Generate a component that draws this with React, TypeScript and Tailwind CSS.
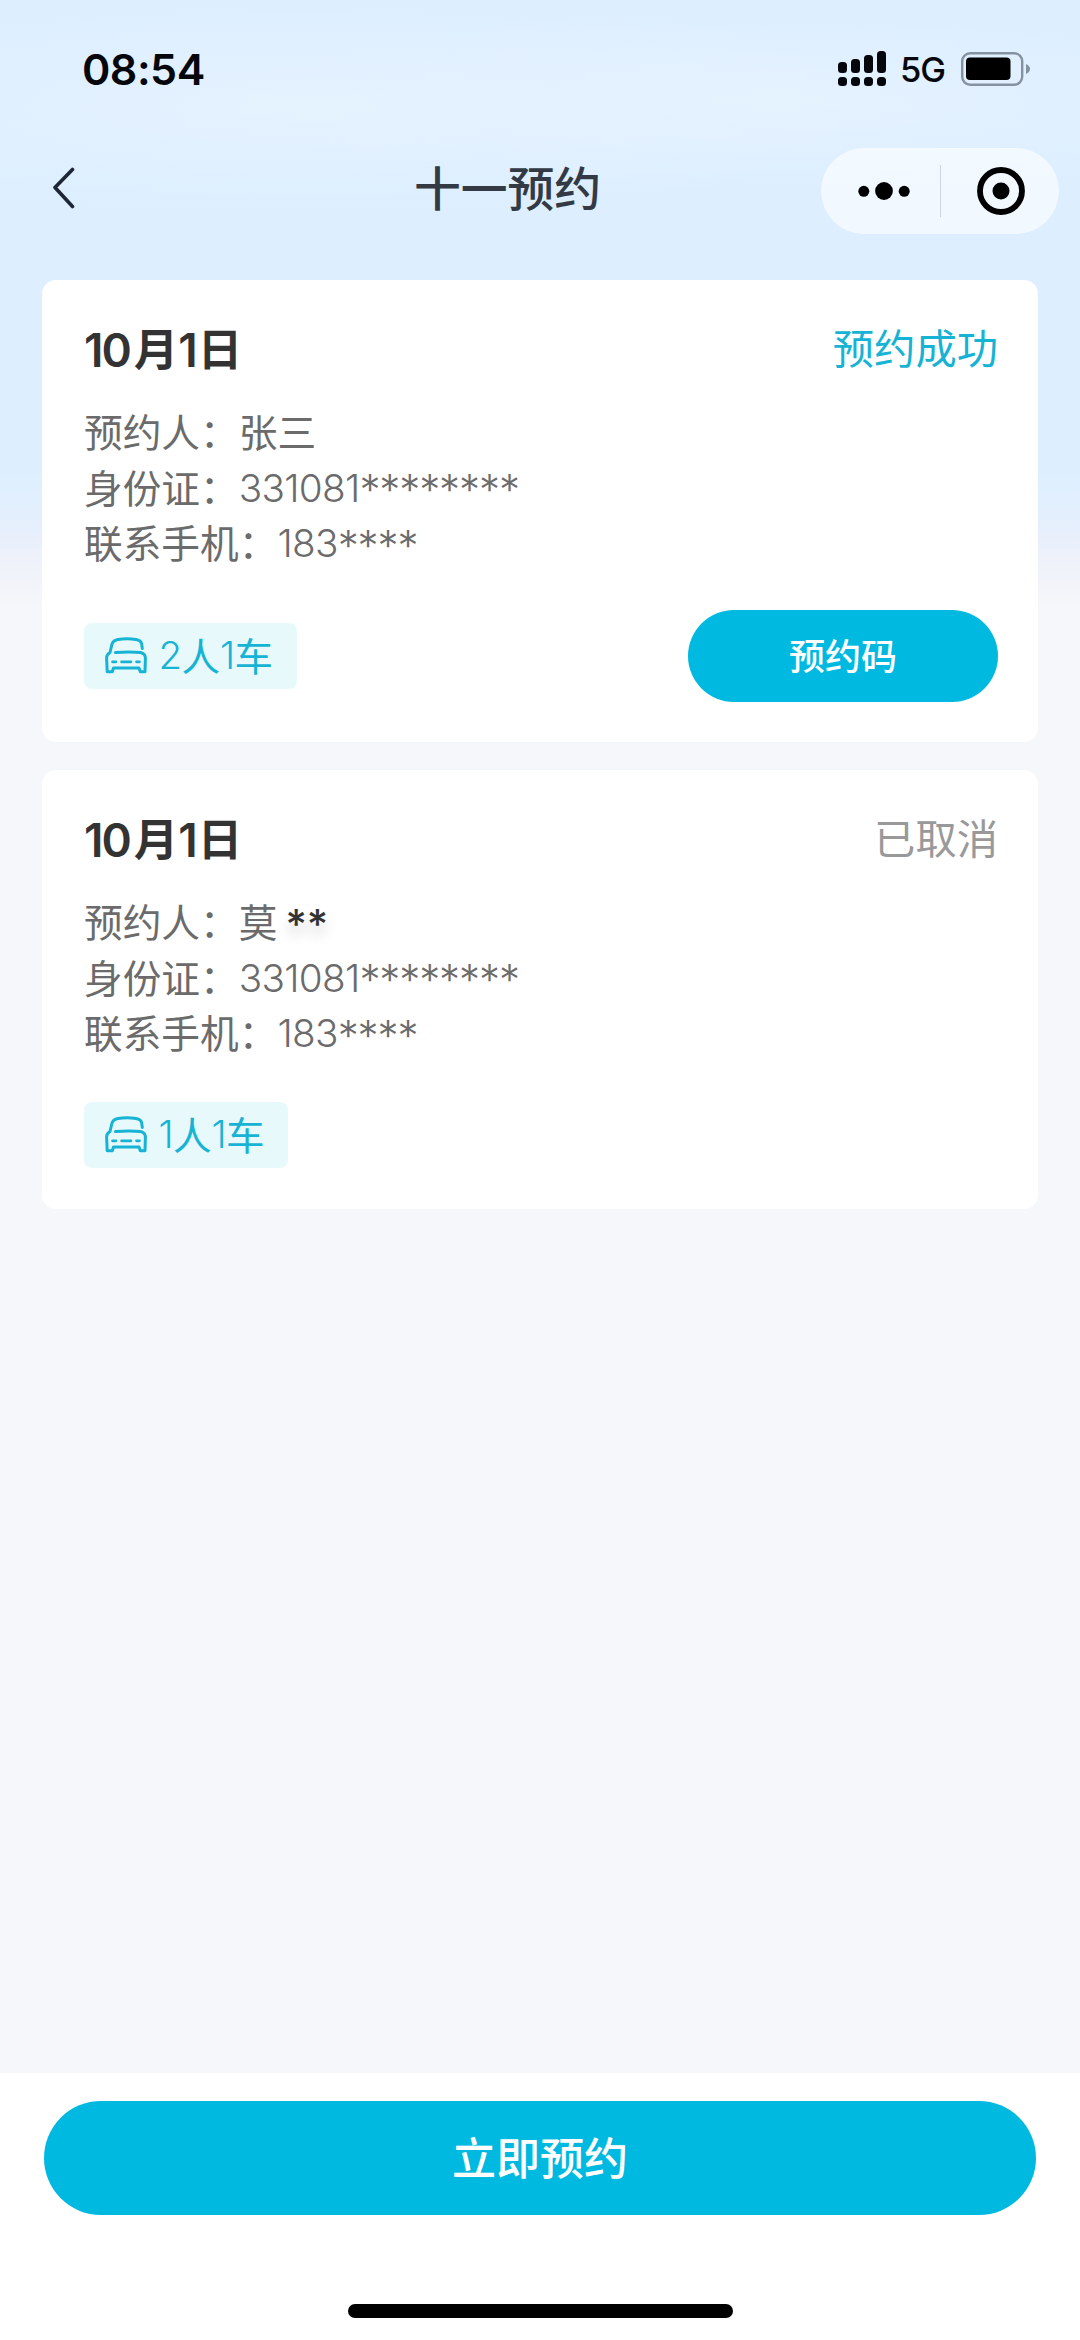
import React from 'react';

type BookingStatus = 'success' | 'cancelled';

interface Booking {
  id: number;
  month: string;
  day: string;
  status: BookingStatus;
  name: string;
  /** Masked part of the name, drawn darker */
  nameMask?: string;
  idPrefix: string;
  phonePrefix: string;
  people: string;
  cars: string;
}

const bookings: Booking[] = [
  {
    id: 1,
    month: '10',
    day: '1',
    status: 'success',
    name: '张三',
    idPrefix: '331081',
    phonePrefix: '183',
    people: '2',
    cars: '1'
  },
  {
    id: 2,
    month: '10',
    day: '1',
    status: 'cancelled',
    name: '莫',
    nameMask: '**',
    idPrefix: '331081',
    phonePrefix: '183',
    people: '1',
    cars: '1'
  }
];

const StatusBar: React.FC = () => (
  <div className="flex h-[138px] items-center justify-between pl-[82px] pr-[50px]">
    <span className="font-[Inter,sans-serif] text-[43px] leading-none font-semibold tracking-[-0.5px] text-[#05070d]">
      08:54
    </span>
    <div className="flex items-center">
      <svg width="48" height="36" viewBox="0 0 48 36" fill="#05070d">
        <rect x="0" y="11" width="9" height="11" rx="3.5" />
        <rect x="13" y="8" width="9" height="14" rx="3.5" />
        <rect x="26" y="4" width="9" height="18" rx="3.5" />
        <rect x="39" y="0" width="9" height="22" rx="3.5" />
        <rect x="0" y="26" width="9" height="9" rx="3.5" />
        <rect x="13" y="26" width="9" height="9" rx="3.5" />
        <rect x="26" y="26" width="9" height="9" rx="3.5" />
        <rect x="39" y="26" width="9" height="9" rx="3.5" />
      </svg>
      <span className="ml-[14px] mt-[3px] w-[46px] font-[Inter,sans-serif] text-[34.5px] leading-none font-medium tracking-[-1px] text-[#05070d]">
        5G
      </span>
      <svg className="ml-[15px]" width="69" height="34" viewBox="0 0 69 34">
        <rect x="1.2" y="1.2" width="60" height="31.6" rx="8" fill="none" stroke="#85929f" strokeWidth="2.4" />
        <rect x="5" y="5.5" width="44.5" height="22.5" rx="4" fill="#000" />
        <path d="M65 12 Q69 14 69 17 Q69 20 65 22 Z" fill="#85929f" />
      </svg>
    </div>
  </div>
);

const NavBar: React.FC = () => (
  <div className="grid h-[106px] grid-cols-[1fr_auto_1fr] items-center">
    <button type="button" aria-label="返回" className="-mt-[7px] ml-[52px] w-[24px]">
      <svg width="24" height="42" viewBox="0 0 24 42" fill="none" stroke="#1c2733" strokeWidth="3.6" strokeLinecap="round">
        <path d="M20.5 2.5 L3 20.5 L20.5 39.5" strokeLinejoin="round" />
      </svg>
    </button>
    <h1 className="-mt-[9px] -ml-[65px] text-[46.8px] leading-none font-medium text-[#333a44]">十一预约</h1>
    <div className="mr-[21px] flex h-[86px] w-[238px] items-center justify-self-end rounded-full bg-white/60">
      <div className="flex w-[119px] justify-center pl-[6px]">
        <svg width="52" height="18" viewBox="0 0 52 18" fill="#000">
          <circle cx="5.8" cy="9.3" r="5.5" />
          <circle cx="26" cy="9" r="8.9" />
          <circle cx="46.2" cy="9.3" r="5.5" />
        </svg>
      </div>
      <div className="h-[52px] w-px bg-[#cdd5de]" />
      <div className="flex flex-1 justify-center pl-[2px]">
        <svg width="48" height="48" viewBox="0 0 48 48">
          <circle cx="24" cy="24" r="21" fill="none" stroke="#000" strokeWidth="5.8" />
          <circle cx="24" cy="24" r="8.5" fill="#000" />
        </svg>
      </div>
    </div>
  </div>
);

const CarIcon: React.FC = () => (
  <svg
    width="42"
    height="37"
    viewBox="0 0 42 37"
    fill="none"
    stroke="currentColor"
    strokeWidth="3"
    strokeLinecap="round"
    strokeLinejoin="round"
  >
    <path d="M10.5 15.6 C20 14.8 28 14.8 36 15.6 Q40.4 17 40.4 21 L40 34.8 H35.3 L34 31 H8.5 L7.3 34.8 H2.2 L1.6 21 Q1.6 17.5 5 15.5 L7 7 Q8.3 3.2 13 2.4 Q22 1 31 2.4 Q35.8 3.2 36.6 6.5 L37.3 11.4" />
    <path d="M7.5 24.8 H11 M16.5 24.8 H26 M31.5 24.8 H34.5" strokeWidth="2.7" />
  </svg>
);

const Digits: React.FC<{ children: React.ReactNode }> = ({ children }) => (
  <span className="font-[Inter,sans-serif] font-light tracking-[-0.7px]">{children}</span>
);

const Stars: React.FC<{ children: React.ReactNode }> = ({ children }) => (
  <span className="mt-[4px] font-[Inter,sans-serif] text-[42px] font-light tracking-[-1.1px]">{children}</span>
);

interface InfoRowProps {
  label: string;
  children: React.ReactNode;
}

const InfoRow: React.FC<InfoRowProps> = ({ label, children }) => (
  <div className="flex h-[55.5px] items-center whitespace-nowrap">
    <span className="-mt-[4px]">{label}：</span>
    {children}
  </div>
);

const BookingCard: React.FC<{ booking: Booking }> = ({ booking }) => {
  const isSuccess = booking.status === 'success';

  return (
    <section className={`rounded-[14px] bg-white pr-[40px] pl-[42px] ${isSuccess ? 'h-[462px]' : 'h-[439px]'}`}>
      <div className="flex h-[125px] items-center justify-between pt-[14px]">
        <h2 className="flex items-center text-[44.5px] leading-none font-bold text-[#333]">
          <span className="font-[Inter,sans-serif] text-[46px] font-semibold tracking-[-2px]">{booking.month}</span>
          <span className="-mt-[4px] ml-[4px]">月</span>
          <span className="font-[Inter,sans-serif] text-[46px] font-semibold">{booking.day}</span>
          <span className="-mt-[4px]">日</span>
        </h2>
        <span className={`-mt-[6px] text-[41.3px] leading-none ${isSuccess ? 'text-[#16b3d4]' : 'text-[#999]'}`}>
          {isSuccess ? '预约成功' : '已取消'}
        </span>
      </div>

      <div className="text-[38.7px] leading-none text-[#6b6b6b]">
        <InfoRow label="预约人">
          <span className="-mt-[4px]">{booking.name}</span>
          {booking.nameMask && (
            <span className="mt-[4px] ml-[8px] font-[Inter,sans-serif] text-[41px] font-medium text-[#333] [text-shadow:0_10px_14px_rgba(0,0,0,0.15)]">
              {booking.nameMask}
            </span>
          )}
        </InfoRow>
        <InfoRow label="身份证">
          <Digits>{booking.idPrefix}</Digits>
          <Stars>********</Stars>
        </InfoRow>
        <InfoRow label="联系手机">
          <Digits>{booking.phonePrefix}</Digits>
          <Stars>****</Stars>
        </InfoRow>
      </div>

      <div className={`flex items-center justify-between ${isSuccess ? 'mt-[38px]' : 'mt-[40px]'}`}>
        <div className="flex h-[66px] items-center rounded-[8px] bg-[#e8f9fc] pr-[24px] pl-[20.5px] text-[38.5px] leading-none text-[#16b3d4]">
          <CarIcon />
          <span className="ml-[12px] flex items-center">
            <Digits>{booking.people}</Digits>
            <span className="-mt-[3px]">人</span>
            <Digits>{booking.cars}</Digits>
            <span className="-mt-[3px]">车</span>
          </span>
        </div>
        {isSuccess && (
          <button
            type="button"
            className="h-[92px] w-[310px] rounded-full bg-[#00b9e1] pb-[4px] text-[36px] leading-none font-medium text-white"
          >
            预约码
          </button>
        )}
      </div>
    </section>
  );
};

const App: React.FC = () => (
  <div className="flex h-[2340px] w-[1080px] flex-col overflow-hidden bg-[#f5f7fa] bg-[radial-gradient(ellipse_620px_110px_at_300px_105px,#e5f2ff_0%,#e5f2ff00_100%),radial-gradient(ellipse_560px_90px_at_780px_100px,#e5f2ff_0%,#e5f2ff00_100%),linear-gradient(180deg,#dceeff_0px,#ddefff_470px,#e6effc_530px,#f0f2fa_565px,#f5f7fa_610px)] font-['Noto_Sans_CJK_SC',sans-serif]">
    <StatusBar />
    <NavBar />
    <main className="flex flex-1 flex-col gap-[28px] px-[42px] pt-[36px]">
      {bookings.map((booking) => (
        <BookingCard key={booking.id} booking={booking} />
      ))}
    </main>
    <footer className="flex h-[267px] flex-col items-center bg-white pt-[28px]">
      <button
        type="button"
        className="h-[114px] w-[992px] rounded-full bg-[#00b9e1] pb-[4px] text-[44px] leading-none font-medium text-white"
      >
        立即预约
      </button>
      <div className="mt-[89px] h-[14px] w-[385px] rounded-full bg-black" />
    </footer>
  </div>
);

export default App;
